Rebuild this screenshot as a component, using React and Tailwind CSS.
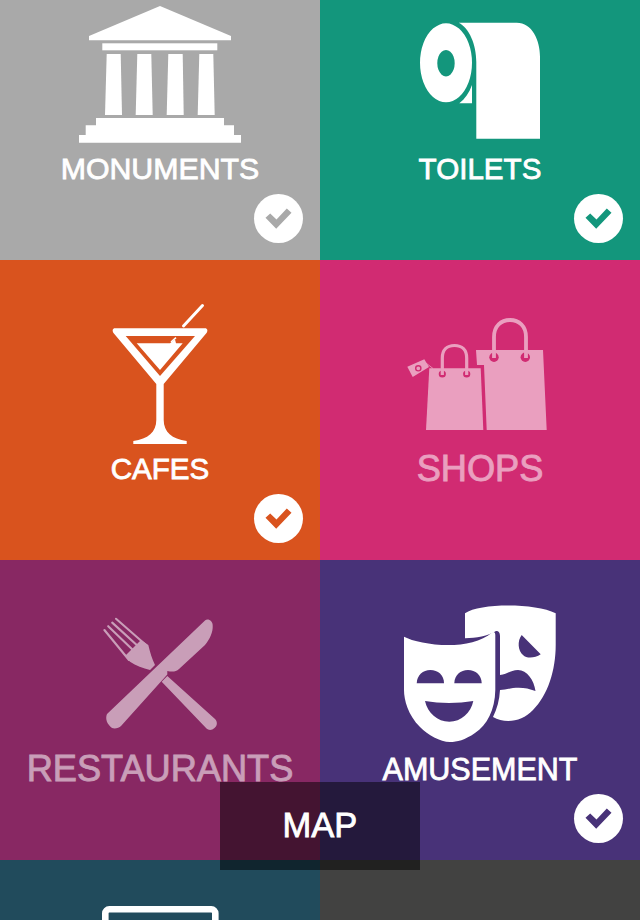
function Check({ color }) {
  return (
    <div className="absolute right-[16.7px] bottom-[17px] w-[49px] h-[49px] rounded-full bg-white">
      <svg viewBox="0 0 49 49" className="block w-full h-full">
        <polygon points="11.5,23.8 16.2,19.5 22.5,25.5 32.8,14.5 37.5,18.8 22.2,34.8" fill={color} />
      </svg>
    </div>
  );
}

function Monuments() {
  return (
    <svg viewBox="79 6 162 137" className="block w-[162px] h-[137px]" fill="#fff">
      <polygon points="160,6 231,36 231,40.3 89,40.3 89,36" />
      <rect x="102.3" y="43.3" width="115" height="7" />
      <polygon points="106.7,54 120.7,54 122,115 105,115" />
      <polygon points="137.3,54 151.3,54 152.7,115 135.7,115" />
      <polygon points="168.3,54 182.7,54 183.7,115 166.7,115" />
      <polygon points="199.3,54 213.3,54 214.7,115 197.7,115" />
      <polygon points="96,118 224,118 224,125.3 234,125.3 234,135 241,135 241,142.7 79,142.7 79,135 85.7,135 85.7,125.3 96,125.3" />
    </svg>
  );
}

function Toilets() {
  return (
    <svg viewBox="420 22 120 117" className="block w-[120px] h-[117px]" fill="#fff">
      <path
        fillRule="evenodd"
        d="M446 23.3a26 39.5 0 1 0 0.01 0ZM446 50a8.7 13.2 0 1 1 -0.01 0Z"
      />
      <path d="M458.7 22.7H516.7C532 22.7 540 40 540 56.7V138.7H476.3V62C476.3 44 469 28 458.7 22.7Z" />
      <path d="M459.3 103.3H472V85C469 93 465 99 459.3 103.3Z" />
    </svg>
  );
}

function Cafes() {
  return (
    <svg viewBox="110 303 100 142" className="block w-[100px] h-[142px]" fill="#fff">
      <path
        fillRule="evenodd"
        d="M115 328.3H205C207.5 328.3 208 331 206.5 333L163.7 384V420C163.7 432 172 439 186.7 441V444H133.3V441C148 439 156.3 432 156.3 420V384L113.5 333C112 331 112.5 328.3 115 328.3ZM125.7 336L160 376L195 336Z"
      />
      <polygon points="136.7,343.3 170,343.3 175,339.5 176,343.3 182.7,343.3 160,370" />
      <line x1="171" y1="342" x2="176" y2="337.7" stroke="#fff" strokeWidth="1.6" />
      <line x1="183.5" y1="326" x2="202.5" y2="305.5" stroke="#fff" strokeWidth="3" strokeLinecap="round" />
    </svg>
  );
}

function Shops() {
  return (
    <svg viewBox="403 318 154 112" className="block w-[154px] h-[112px]">
      <polygon fill="#fff" points="476,350 543,350 546.7,430 486.7,430 484,365 477,365" />
      <circle cx="494" cy="357.3" r="4.7" fill="#d12b72" />
      <circle cx="525.3" cy="357.3" r="4.7" fill="#d12b72" />
      <path d="M494 358V337C494 326 501 320 510 320C519 320 526 326 526 337V358" fill="none" stroke="#fff" strokeWidth="3.8" />
      <polygon fill="#fff" points="429.3,368.3 480.7,368.3 483.3,430 426,430" />
      <circle cx="442.3" cy="374" r="3.6" fill="#d12b72" />
      <circle cx="466.7" cy="374" r="3.6" fill="#d12b72" />
      <path d="M442.3 375V358C442.3 350 447 345.5 454.5 345.5C462 345.5 466.7 350 466.7 358V375" fill="none" stroke="#fff" strokeWidth="3.2" />
      <polygon fill="#fff" points="407.3,366.7 424.3,359.3 429,367 412.7,377" />
      <circle cx="418.3" cy="368.3" r="2.6" fill="none" stroke="#d12b72" strokeWidth="1.4" />
      <line x1="424" y1="361.5" x2="433" y2="368.5" stroke="#fff" strokeWidth="0.8" />
    </svg>
  );
}

function Restaurants() {
  return (
    <svg viewBox="103 617 114 114" className="block w-[114px] h-[114px]" fill="#fff">
      <path d="M141 640L148.3 645C150 652 152 659 155 665L150 670C143 668 136 666 130 661.7L125 656Z" />
      <g stroke="#fff" strokeWidth="2.1" strokeLinecap="round">
        <line x1="116" y1="618.8" x2="146" y2="645" />
        <line x1="112.2" y1="622.6" x2="140" y2="648" />
        <line x1="108.2" y1="626.2" x2="135" y2="652" />
        <line x1="104.4" y1="630" x2="129" y2="660" />
      </g>
      <path d="M167.3 676L215 719C218 722 217 726 214.5 728C212 730.5 208.5 730.5 206.5 728.5L161.7 681.7Z" />
      <path d="M107 714C105 719 107 724 112 728C115 729 119 728 121 726L167.3 674.5V671C172 672 176 672 179 669L205 645C210 639 213 632 212.7 626C213 621 208 618 205 620.5Z" />
    </svg>
  );
}

function Masks() {
  const bg = "#483278";
  return (
    <svg viewBox="404 605 152 138" className="block w-[152px] h-[138px]" fill="#fff">
      <path d="M465 613.3C480 603 535 603 555.7 613.3V645C555.7 670 548 695 533 710C522 722 505 724 493 717C497 709 499.5 700 500 690V636C500 632 498 630.5 496 631C488 636 476 638 465 638.3Z" />
      <path fill={bg} d="M521.7 635L540.7 654.3C535 658 527 659 523 655C518 651 517 641 521.7 635Z" />
      <path fill={bg} d="M500 675C507 675 510 670 518 670C527 670 534 680 535.5 691C528 688 521 687 513 688C508 689 504 690 500 690Z" />
      <path d="M404 636.7C420 645 470 652 492 632.5C494 631.5 495.3 632.5 495.3 635V690C495 710 487 725 475 733C465 740 457 742 450 742C440 742 428 735 420 727C408 715 404 700 404 690Z" />
      <path fill={bg} d="M416.7 683.3C417 675 423 670 430.3 670C438 670 444 675 444 683.3Z" />
      <path fill={bg} d="M454.3 683.3C454.5 675 460.5 670 468 670C475.5 670 481.5 675 481.7 683.3Z" />
      <path fill={bg} d="M425 701C440 703.5 458 703.5 473.3 701C471 713 461 721.7 449.3 721.7C437.5 721.7 427.5 713 425 701Z" />
    </svg>
  );
}

function Monitor() {
  return (
    <svg viewBox="0 0 117 90" className="block w-[117px] h-[90px]" fill="none">
      <rect x="3.3" y="3.3" width="110" height="83" rx="4" stroke="#fff" strokeWidth="6.6" />
    </svg>
  );
}

const labelBase = "font-['Liberation_Sans',sans-serif] whitespace-nowrap uppercase [-webkit-text-stroke:0.8px_currentColor]";

export default function App() {
  return (
    <div className="relative w-[640px] h-[920px] overflow-hidden">
      <div className="grid grid-cols-2">
        <div className="relative h-[260px] bg-[#a9a9a9] flex flex-col items-center pt-[6px] text-white">
          <Monuments />
          <div className={`${labelBase} mt-[11px] text-[30.3px] leading-[30px]`}>Monuments</div>
          <Check color="#a9a9a9" />
        </div>
        <div className="relative h-[260px] bg-[#13967c] flex flex-col items-center pt-[22px] text-white">
          <Toilets />
          <div className={`${labelBase} mt-[15px] text-[29.6px] leading-[30px]`}>Toilets</div>
          <Check color="#13967c" />
        </div>

        <div className="relative h-[300px] bg-[#d9531e] flex flex-col items-center pt-[43px] text-white">
          <Cafes />
          <div className={`${labelBase} mt-[9px] text-[29.6px] leading-[30px]`}>Cafes</div>
          <Check color="#d9531e" />
        </div>
        <div className="relative h-[300px] bg-[#d12b72] flex flex-col items-center pt-[58px] text-white">
          <div className="flex flex-col items-center opacity-55">
            <Shops />
            <div className={`${labelBase} mt-[21px] text-[36.2px] leading-[36px]`}>Shops</div>
          </div>
        </div>

        <div className="relative h-[300px] bg-[#882863] flex flex-col items-center pt-[57px] text-white">
          <div className="flex flex-col items-center opacity-55">
            <Restaurants />
            <div className={`${labelBase} mt-[20px] text-[36.2px] leading-[36px]`}>Restaurants</div>
          </div>
        </div>
        <div className="relative h-[300px] bg-[#483278] flex flex-col items-center pt-[45px] text-white">
          <Masks />
          <div className={`${labelBase} mt-[11px] text-[30.5px] leading-[30px]`}>Amusement</div>
          <Check color="#483278" />
        </div>

        <div className="relative h-[260px] bg-[#214b5c] flex flex-col items-center pt-[46px]">
          <Monitor />
        </div>
        <div className="relative h-[260px] bg-[#424241]" />
      </div>

      <div className={`${labelBase} absolute left-[220px] top-[782px] w-[200px] h-[88px] flex items-center justify-center bg-black/50 text-white text-[34.5px]`}>
        Map
      </div>
    </div>
  );
}
